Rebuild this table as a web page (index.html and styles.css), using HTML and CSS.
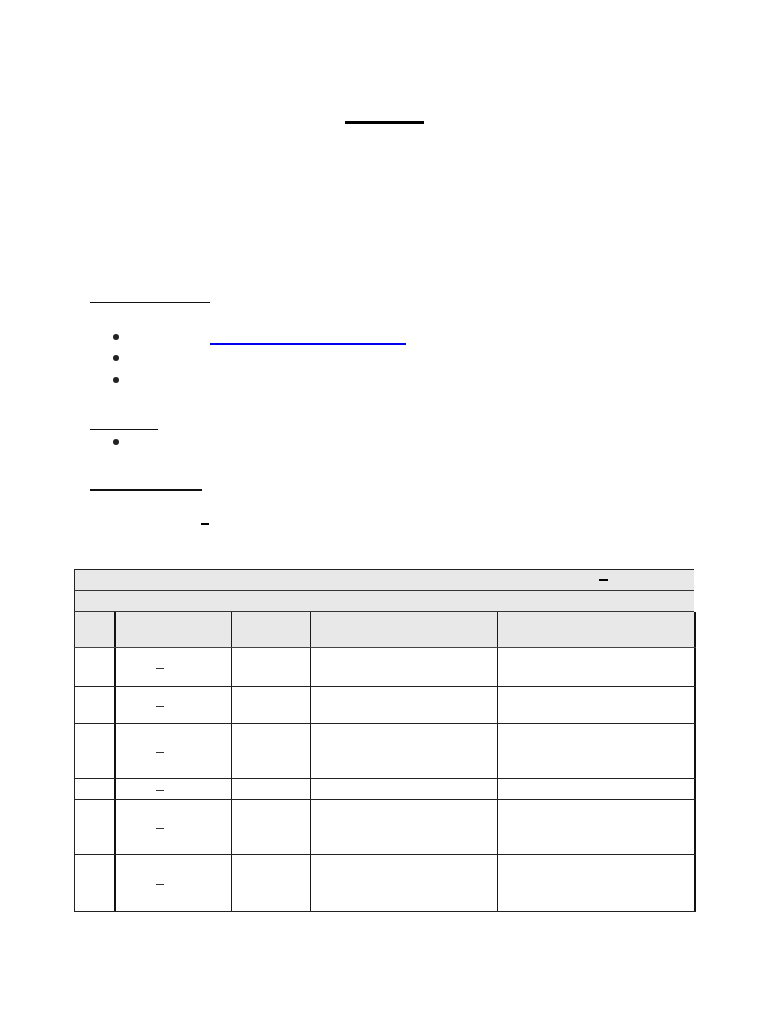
FILE: index.html
```html
<!DOCTYPE html>
<html>
<head>
<meta charset="utf-8">
<link rel="stylesheet" href="styles.css">
</head>
<body>
<div class="page">
  <div class="title-rule"></div>

  <div class="rule rule-sec1"></div>
  <ul class="bullets bullets-1">
    <li class="item"><span class="dot"></span><span class="link-line"></span></li>
    <li class="item"><span class="dot"></span></li>
    <li class="item"><span class="dot"></span></li>
  </ul>

  <div class="rule rule-sec2"></div>
  <ul class="bullets bullets-2">
    <li class="item"><span class="dot"></span></li>
  </ul>

  <div class="rule rule-sec3"></div>
  <div class="note-dash"></div>

  <div class="tbl">
    <div class="band band-top"><span class="band-dash"></span></div>
    <div class="band"></div>
    <div class="row head">
      <div class="c c1"></div><div class="c c2"></div><div class="c c3"></div><div class="c c4"></div><div class="c c5"></div>
    </div>
    <div class="row h38">
      <div class="c c1"></div><div class="c c2"><span class="dash"></span></div><div class="c c3"></div><div class="c c4"></div><div class="c c5"></div>
    </div>
    <div class="row h36">
      <div class="c c1"></div><div class="c c2"><span class="dash"></span></div><div class="c c3"></div><div class="c c4"></div><div class="c c5"></div>
    </div>
    <div class="row h54">
      <div class="c c1"></div><div class="c c2"><span class="dash"></span></div><div class="c c3"></div><div class="c c4"></div><div class="c c5"></div>
    </div>
    <div class="row h20">
      <div class="c c1"></div><div class="c c2"><span class="dash"></span></div><div class="c c3"></div><div class="c c4"></div><div class="c c5"></div>
    </div>
    <div class="row h54">
      <div class="c c1"></div><div class="c c2"><span class="dash"></span></div><div class="c c3"></div><div class="c c4"></div><div class="c c5"></div>
    </div>
    <div class="row h56">
      <div class="c c1"></div><div class="c c2"><span class="dash"></span></div><div class="c c3"></div><div class="c c4"></div><div class="c c5"></div>
    </div>
  </div>
</div>
</body>
</html>
```

FILE: styles.css
```css
html, body {
  margin: 0;
  padding: 0;
  background: #ffffff;
  font-family: "Liberation Sans", Arial, sans-serif;
}

.page {
  width: 768px;
  min-height: 1024px;
  overflow: hidden;
}

.title-rule {
  width: 79px;
  margin: 121px auto 0;
  border-top: 3px solid #000;
}

.rule {
  margin-left: 90px;
  border-top: 1px solid #111;
}

.rule-sec1 {
  width: 120px;
  margin-top: 178px;
}

.rule-sec2 {
  width: 68px;
  margin-top: 38px;
}

.rule-sec3 {
  width: 112px;
  margin-top: 36px;
  border-top-width: 2px;
}

.bullets {
  list-style: none;
  margin: 0;
  padding: 0;
}

.bullets-1 {
  margin-top: 23px;
}

.bullets-2 {
  margin-top: 2px;
}

.item {
  display: flex;
  align-items: center;
  height: 21.5px;
}

.dot {
  width: 6px;
  height: 6px;
  margin-left: 113px;
  border-radius: 50%;
  background: #222;
}

.link-line {
  align-self: flex-start;
  width: 196px;
  margin-left: 91px;
  margin-top: 17px;
  border-top: 2px solid #0000ee;
}

.note-dash {
  width: 8px;
  margin-left: 201px;
  margin-top: 32px;
  border-top: 2px solid #000;
}

.tbl {
  width: 622px;
  margin-left: 74px;
  margin-top: 44px;
}

.band {
  width: 619px;
  height: 20px;
  background: #e8e8e8;
  border-left: 1px solid #222;
  border-bottom: 1px solid #333;
  display: flex;
  align-items: center;
}

.band-top {
  border-top: 1px solid #222;
}

.band-dash {
  width: 9px;
  margin-left: 524px;
  border-top: 2px solid #000;
}

.row {
  display: flex;
  border-left: 1px solid #222;
  border-bottom: 1px solid #222;
}

.head {
  height: 35px;
  background: #e8e8e8;
  border-bottom-color: #444;
}

.h38 { height: 38px; }
.h36 { height: 36px; }
.h54 { height: 54px; }
.h20 { height: 20px; }
.h56 { height: 56px; }

.c {
  flex: none;
  border-right: 1px solid #1a1a1a;
  display: flex;
  align-items: center;
}

.c1 { width: 39px; border-right: 2px solid #111; }
.c2 { width: 115px; }
.c3 { width: 78px; }
.c4 { width: 186px; }
.c5 { width: 196px; border-right: 2px solid #111; }

.dash {
  width: 8px;
  margin-left: 40px;
  margin-top: 2px;
  border-top: 1px solid #333;
}
```
